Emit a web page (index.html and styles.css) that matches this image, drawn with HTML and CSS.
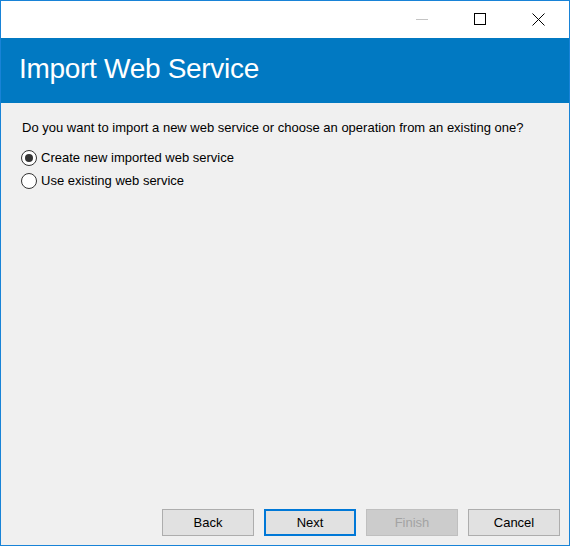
FILE: index.html
```html
<!DOCTYPE html>
<html>
<head>
<meta charset="utf-8">
<link rel="stylesheet" href="styles.css">
</head>
<body>
<div class="window">
  <div class="titlebar">
    <div class="ctrl">
      <svg width="12" height="12" viewBox="0 0 12 12"><line x1="0" y1="6.5" x2="12" y2="6.5" stroke="#c4c4c4" stroke-width="1"/></svg>
    </div>
    <div class="ctrl">
      <svg width="12" height="12" viewBox="0 0 12 12"><rect x="0.5" y="0.5" width="11" height="11" fill="none" stroke="#000" stroke-width="1"/></svg>
    </div>
    <div class="ctrl">
      <svg width="13" height="13" viewBox="0 0 13 13"><path d="M0.5 0.5 L12.5 12.5 M12.5 0.5 L0.5 12.5" stroke="#000" stroke-width="1" fill="none"/></svg>
    </div>
  </div>
  <div class="header">
    <h1 class="title">Import Web Service</h1>
  </div>
  <div class="content">
    <p class="question">Do you want to import a new web service or choose an operation from an existing one?</p>
    <div class="options">
      <label class="option"><span class="radio checked"></span>Create new imported web service</label>
      <label class="option"><span class="radio"></span>Use existing web service</label>
    </div>
  </div>
  <div class="buttons">
    <button class="btn">Back</button>
    <button class="btn default">Next</button>
    <button class="btn disabled">Finish</button>
    <button class="btn">Cancel</button>
  </div>
</div>
</body>
</html>
```
FILE: styles.css
```css
html, body {
  margin: 0;
  padding: 0;
}
body {
  width: 570px;
  height: 546px;
  font-family: "Liberation Sans", Arial, sans-serif;
}
.window {
  box-sizing: border-box;
  width: 570px;
  height: 546px;
  border: 1px solid #1883d7;
  background: #f0f0f0;
  display: flex;
  flex-direction: column;
}
.titlebar {
  height: 37px;
  background: #ffffff;
  display: flex;
  justify-content: flex-end;
  align-items: flex-start;
  gap: 46px;
  padding: 12px 24px 0 0;
  box-sizing: border-box;
}
.ctrl {
  display: flex;
}
.header {
  height: 65px;
  background: #0179c2;
  display: flex;
  align-items: flex-start;
}
.title {
  margin: 0;
  padding: 13px 0 0 18px;
  font-weight: normal;
  font-size: 28px;
  letter-spacing: -0.3px;
  line-height: 36px;
  color: #ffffff;
}
.content {
  flex: 1;
  padding: 16px 0 0 20px;
  font-size: 13px;
  color: #000;
}
.question {
  margin: 0 0 0 1px;
  line-height: 17px;
}
.options {
  display: flex;
  flex-direction: column;
  gap: 7px;
  margin-top: 14px;
}
.option {
  display: flex;
  align-items: center;
  height: 16px;
  gap: 4px;
  line-height: 16px;
}
.radio {
  box-sizing: border-box;
  width: 16px;
  height: 16px;
  border: 1px solid #333;
  border-radius: 50%;
  background: #fff;
  display: flex;
  align-items: center;
  justify-content: center;
}
.radio.checked::after {
  content: "";
  width: 8px;
  height: 8px;
  border-radius: 50%;
  background: #333;
}
.buttons {
  display: flex;
  justify-content: flex-end;
  gap: 10px;
  padding: 0 9px 9px 0;
}
.btn {
  box-sizing: border-box;
  width: 92px;
  height: 27px;
  border: 1px solid #adadad;
  background: #e1e1e1;
  font-family: "Liberation Sans", Arial, sans-serif;
  font-size: 13px;
  color: #000;
  padding: 0;
}
.btn.default {
  border: 2px solid #0078d7;
}
.btn.disabled {
  border-color: #bfbfbf;
  background: #cccccc;
  color: #a3a3a3;
}
```
